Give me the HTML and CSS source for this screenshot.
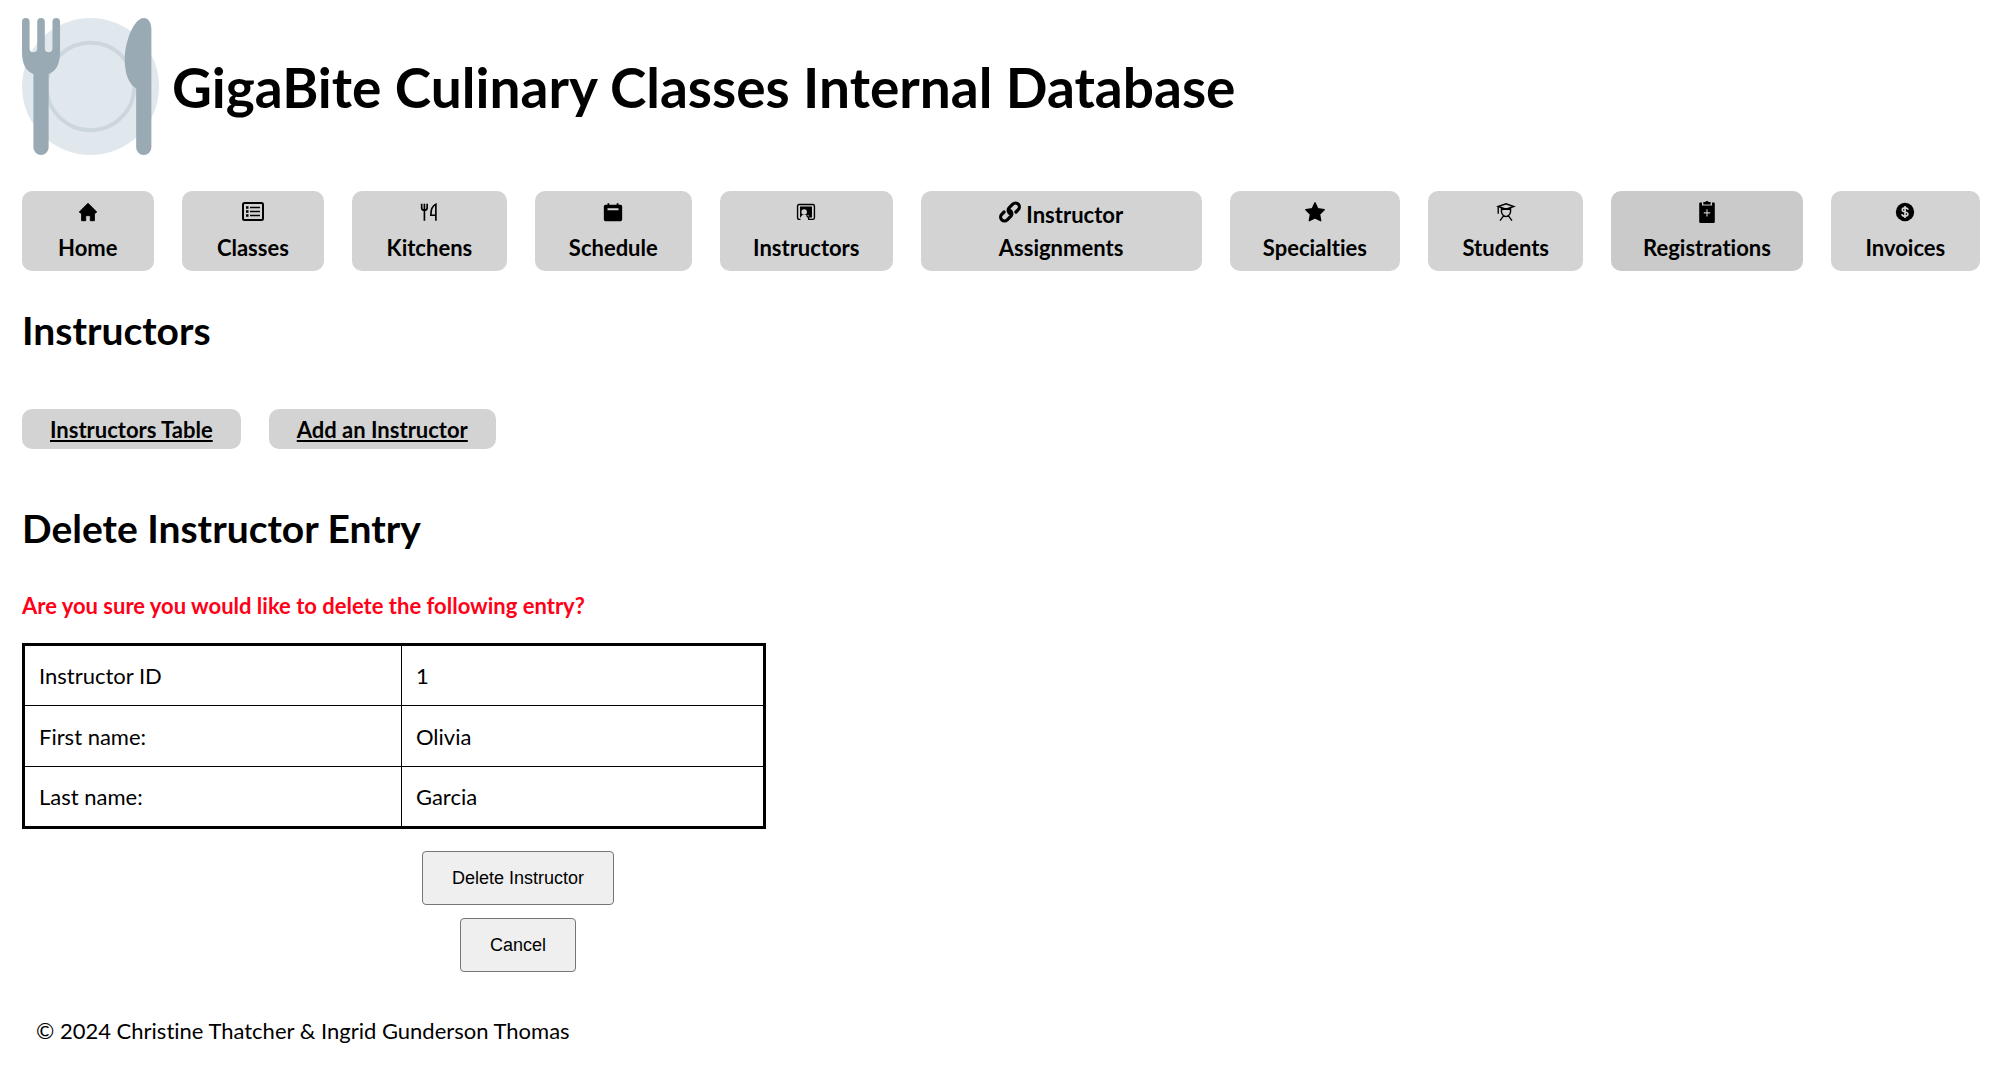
FILE: index.html
```html
<!DOCTYPE html>
<html lang="en">
<head>
<meta charset="utf-8">
<meta name="viewport" content="width=device-width, initial-scale=1">
<title>GigaBite Culinary Classes Internal Database</title>
<link rel="stylesheet" href="styles.css">
</head>
<body>
<header class="banner">
  <svg class="logo" viewBox="0 0 36 36" aria-hidden="true">
    <circle cx="18" cy="18" r="18" fill="#e1e8ed"/>
    <circle cx="18" cy="18" r="11.5" fill="none" stroke="#ccd6dd"/>
    <path fill="#99aab5" d="M0 1a1 1 0 0 1 2 0v7a1 1 0 0 0 2 0V1a1 1 0 0 1 2 0v7a1 1 0 0 0 2 0V1a1 1 0 0 1 2 0v8c0 3-1 5-3 5.700V34a2 2 0 0 1-4 0V14.700C1 14 0 12 0 9zM32 0c1.200 0 2 1.200 2 3v31a2 2 0 0 1-4 0V18.500c-2-1-3-4-3-7.500 0-5 2.500-11 5-11z"/>
  </svg>
  <h1 class="site-title">GigaBite Culinary Classes Internal Database</h1>
</header>
<nav class="main-nav">
  <a class="tab" href="#"><svg class="icon" viewBox="0 0 24 24"><path stroke="#000" stroke-linejoin="round" d="M12 2.500 2.500 12 3.500 13H5v8.500h4.500V16h5v5.500H19V13h1.500l1-1z"/></svg> Home</a>
  <a class="tab" href="#"><svg class="icon" viewBox="0 -1 22 22"><rect x="1" y="1" width="20" height="17" rx="1.500" fill="none" stroke="#000" stroke-width="2"/><path d="M4 4.200h2.500v2.500H4zM8 4.700h10v1.500H8zM4 8.200h2.500v2.500H4zM8 8.700h10v1.500H8zM4 12.300h2.500v2.500H4zM8 12.800h10v1.500H8z"/></svg> Classes</a>
  <a class="tab" href="#"><svg class="icon" viewBox="-2 -2 24 24"><path fill="none" stroke="#000" stroke-width="1.800" d="M2 1v4.500q0 2.500 3 2.500t3-2.500V1M5 1v18.500M17.500 19.500V1.500C14 3 12 8 12 13.500h5.500"/></svg> Kitchens</a>
  <a class="tab" href="#"><svg class="icon" viewBox="-2 -2 24 24"><path fill-rule="evenodd" d="M4 .5h2V2h8V.500h2V2h2.200Q20 2 20 3.800v14.400q0 1.800-1.800 1.800H1.800Q0 20 0 18.200V3.800Q0 2 1.800 2H4zM4 6v2h12V6z"/></svg> Schedule</a>
  <a class="tab" href="#"><svg class="icon" viewBox="-2 -2 24 24"><path d="M3.500 4h13v12h-3.500v-2.500H7V16H3.500z"/><circle cx="8" cy="10" r="3" fill="#d3d3d3"/><path fill="#d3d3d3" d="M4 18q0-5 4-5t4 5z"/><path fill="none" stroke="#000" stroke-width="1.500" d="M4 18H2.500q-1.700 0-1.700-1.700V3.500q0-1.700 1.700-1.700h15q1.700 0 1.700 1.700v12.800q0 1.700-1.700 1.700H13q0-3-2.500-4"/></svg> Instructors</a>
  <a class="tab tab-wide" href="#"><svg class="icon" viewBox="0 0 24 24"><path fill="none" stroke="#000" stroke-width="3.500" stroke-linecap="round" d="M14 14.500a4.800 4.800 0 0 1-4-4.500q0-1.500 1-2.500L15 3.500a4 4 0 0 1 6 6L18.500 12M10 9.500a4.800 4.800 0 0 1 4 4.500q0 1.500-1 2.500l-4 4a4 4 0 0 1-6-6L5.500 12"/></svg> Instructor Assignments</a>
  <a class="tab" href="#"><svg class="icon" viewBox="0 0 24 24"><path stroke="#000" stroke-width="1.500" stroke-linejoin="round" d="m12 2 3 6.500 7 1-5 5 1.200 7L12 18.300 5.800 21.500 7 14.500l-5-5 7-1z"/></svg> Specialties</a>
  <a class="tab" href="#"><svg class="icon" viewBox="-2 -2 24 24"><path fill="none" stroke="#000" stroke-width="1.500" d="M1.500 4 10 1l8.500 3L10 7zM1.500 4v8M5 5.500V9q0 5 5 6 5-1 5-6V5.500M5 7.500Q10 6 15 7.500M3.500 19.500 7.500 14M16.500 19.500l-4-5.500"/></svg> Students</a>
  <a class="tab tab-hover" href="#"><svg class="icon" viewBox="-3 0 24 24"><path fill-rule="evenodd" d="M1.500 1.500H3.500V5h11V1.500h2q1 0 1 1v20q0 1.500-1.500 1.500H2Q.5 24 .5 22.500v-20q0-1 1-1zM8.400 9v3.400H5.500v1.200h2.900V17h1.200v-3.400h2.900v-1.200H9.600V9zM5 1h2q2-2 4 0h2v2.700H5z"/></svg> Registrations</a>
  <a class="tab" href="#"><svg class="icon" viewBox="-2 -2 24 24"><circle cx="10" cy="10" r="10"/><path fill="none" stroke="#d3d3d3" stroke-width="1.800" d="M13.200 7.500Q13 5.500 10 5.500T7 7.700c0 3 6.200 1.500 6.200 4.500q0 2.300-3.200 2.300t-3.300-2.200M10 3.500v13"/></svg> Invoices</a>
</nav>
<main>
  <h2 class="heading">Instructors</h2>
  <nav class="sub-nav">
    <a class="pill" href="#">Instructors Table</a>
    <a class="pill" href="#">Add an Instructor</a>
  </nav>
  <h2 class="heading">Delete Instructor Entry</h2>
  <p class="warning">Are you sure you would like to delete the following entry?</p>
  <form class="delete-form">
    <table class="entry">
      <tr><th scope="row">Instructor ID</th><td>1</td></tr>
      <tr><th scope="row">First name:</th><td>Olivia</td></tr>
      <tr><th scope="row">Last name:</th><td>Garcia</td></tr>
    </table>
    <div class="actions">
      <button class="btn" type="button">Delete Instructor</button>
      <button class="btn" type="button">Cancel</button>
    </div>
  </form>
</main>
<footer class="footer">© 2024 Christine Thatcher &amp; Ingrid Gunderson Thomas</footer>
</body>
</html>
```

FILE: styles.css
```css
* { box-sizing: border-box; }
body {
  margin: 0;
  padding: 18px 19px 0 22px;
  background: #fff;
  color: #000;
  font: 22px/33px Lato, sans-serif;
  font-variant-ligatures: none;
}
.banner { display: flex; align-items: center; gap: 13px; }
.logo { width: 137px; height: 137px; flex: none; }
.site-title { margin: 0; font-size: 55px; line-height: 66px; font-weight: 700; }
.main-nav { display: flex; justify-content: space-between; gap: 28px; margin-top: 36px; }
.tab {
  padding: 7px 28px;
  border-radius: 10px;
  background: #d3d3d3;
  color: #000;
  font-weight: 700;
  text-align: center;
  text-decoration: none;
}
.tab-wide { flex: 0 0 281px; }
.tab-hover { background: #cacaca; }
.icon { width: 22px; height: 22px; }
.heading { margin: 35px 0 0; font-size: 39px; line-height: 48px; font-weight: 700; }
.sub-nav { display: flex; gap: 28px; margin: 55px 0; }
.pill { padding: 4px 28px 3px; border-radius: 10px; background: #d3d3d3; color: #000; font-weight: 700; }
.warning { margin: 37px 0 21px; color: #ff0018; font-weight: 700; }
.delete-form { width: 744px; }
.entry { width: 100%; border: 3px solid #000; border-collapse: collapse; }
.entry th, .entry td { height: 61px; padding: 0 14px; border: 1px solid #000; font-weight: 400; text-align: left; }
.entry th { width: 51%; }
.actions { display: flex; flex-direction: column; align-items: center; gap: 13px; margin: 22px 0 0 248px; }
.btn { height: 54px; padding: 0 29px; border: 1px solid #767676; border-radius: 4px; background: #efefef; color: #000; font: 18px "Liberation Sans", Arial, sans-serif; }
.footer { padding: 42px 14px 22px; }
```
